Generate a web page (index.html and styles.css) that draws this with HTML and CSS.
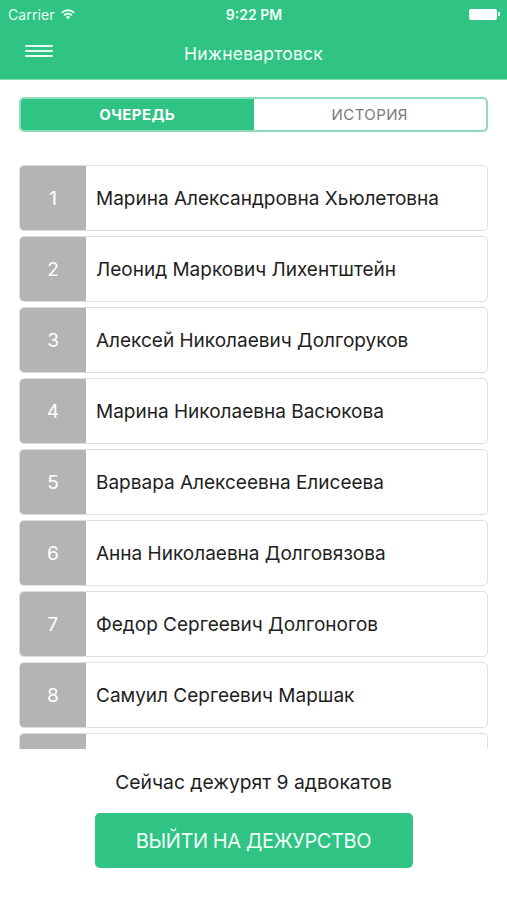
FILE: index.html
```html
<!DOCTYPE html>
<html lang="ru">
<head>
<meta charset="utf-8">
<title>Очередь</title>
<link rel="stylesheet" href="styles.css">
</head>
<body>
<div class="app">
  <header class="topbar">
    <div class="status">
      <div class="status-left">
        <span class="carrier">Carrier</span>
        <svg class="wifi" width="16" height="12" viewBox="0 0 16 12">
          <path d="M1 4.2 A10 10 0 0 1 15 4.2 L13.6 5.6 A8 8 0 0 0 2.4 5.6 Z" fill="#e8fff3"/>
          <path d="M3.4 6.6 A6.6 6.6 0 0 1 12.6 6.6 L11.2 8 A4.6 4.6 0 0 0 4.8 8 Z" fill="#e8fff3"/>
          <path d="M5.8 9 A3.2 3.2 0 0 1 10.2 9 L8 11.4 Z" fill="#e8fff3"/>
        </svg>
      </div>
      <span class="time">9:22 PM</span>
      <div class="battery"><span class="battery-body"></span><span class="battery-nub"></span></div>
    </div>
    <div class="navbar">
      <button class="menu" aria-label="Меню">
        <span></span><span></span><span></span>
      </button>
      <h1 class="title">Нижневартовск</h1>
    </div>
  </header>

  <div class="segments">
    <div class="segment active">ОЧЕРЕДЬ</div>
    <div class="segment">ИСТОРИЯ</div>
  </div>

  <div class="list">
    <div class="row"><div class="num">1</div><div class="name">Марина Александровна Хьюлетовна</div></div>
    <div class="row"><div class="num">2</div><div class="name">Леонид Маркович Лихентштейн</div></div>
    <div class="row"><div class="num">3</div><div class="name">Алексей Николаевич Долгоруков</div></div>
    <div class="row"><div class="num">4</div><div class="name">Марина Николаевна Васюкова</div></div>
    <div class="row"><div class="num">5</div><div class="name">Варвара Алексеевна Елисеева</div></div>
    <div class="row"><div class="num">6</div><div class="name">Анна Николаевна Долговязова</div></div>
    <div class="row"><div class="num">7</div><div class="name">Федор Сергеевич Долгоногов</div></div>
    <div class="row"><div class="num">8</div><div class="name">Самуил Сергеевич Маршак</div></div>
    <div class="row"><div class="num"></div><div class="name"></div></div>
  </div>

  <p class="count">Сейчас дежурят 9 адвокатов</p>
  <button class="duty">ВЫЙТИ НА ДЕЖУРСТВО</button>
</div>
</body>
</html>
```

FILE: styles.css
```css
* { box-sizing: border-box; }
html, body { margin: 0; padding: 0; background: #fff; }
body { font-family: Inter, Roboto, "Liberation Sans", sans-serif; color: #1e1e1e; }

.app { width: 507px; height: 900px; display: flex; flex-direction: column; align-items: center; }

.topbar {
  width: 100%;
  height: 80px;
  background: #2fc384;
  border-bottom: 1px solid #7fe0b5;
  display: flex;
  flex-direction: column;
}
.status {
  height: 28px;
  display: flex;
  align-items: center;
  justify-content: space-between;
  padding: 0 7px 0 8px;
}
.status-left { display: flex; align-items: center; gap: 5px; width: 120px; }
.carrier { font-size: 14px; color: #e8fff3; letter-spacing: 0.1px; }
.wifi { margin-top: -1px; }
.time { font-size: 14px; font-weight: 600; color: #f4fff9; }
.battery { width: 120px; display: flex; justify-content: flex-end; align-items: center; gap: 1px; }
.battery-body { width: 28px; height: 11px; background: #fff; border-radius: 2px; }
.battery-nub { width: 2px; height: 4px; background: #e8fff3; border-radius: 0 1px 1px 0; }

.navbar { flex: 1; display: flex; align-items: center; justify-content: center; position: relative; }
.menu {
  position: absolute;
  left: 25px;
  top: 17px;
  width: 28px;
  height: 12px;
  padding: 0;
  border: 0;
  background: none;
  display: flex;
  flex-direction: column;
  justify-content: space-between;
}
.menu span { display: block; height: 2px; background: #e8fff3; border-radius: 1px; }
.title { margin: 0; font-size: 17.5px; font-weight: 400; color: #f4fff9; letter-spacing: 0.2px; }

.segments {
  margin-top: 17px;
  width: 469px;
  height: 35px;
  border: 2px solid #8fdcba;
  border-radius: 5px;
  display: flex;
  overflow: hidden;
}
.segment {
  flex: 1;
  display: flex;
  align-items: center;
  justify-content: center;
  font-size: 15px;
  color: #7a7a7a;
  letter-spacing: 0.4px;
}
.segment.active { background: #2fc384; color: #fff; font-weight: 700; }

.list {
  margin-top: 33px;
  width: 469px;
  height: 584px;
  overflow: hidden;
  display: flex;
  flex-direction: column;
  gap: 5px;
  flex-shrink: 0;
}
.row {
  flex-shrink: 0;
  height: 66px;
  display: flex;
  border: 1px solid #dedede;
  border-radius: 5px;
  overflow: hidden;
}
.num {
  width: 66px;
  background: #b4b4b4;
  color: #fff;
  font-size: 19px;
  display: flex;
  align-items: center;
  justify-content: center;
}
.name {
  flex: 1;
  padding-left: 10px;
  display: flex;
  align-items: center;
  font-size: 19px;
  color: #1e1e1e;
}

.count { margin: 21px 0 0; font-size: 19.3px; line-height: 24px; color: #1e1e1e; }
.duty {
  margin-top: 19px;
  width: 318px;
  height: 55px;
  border: 0;
  border-radius: 5px;
  background: #2fc384;
  color: #effff7;
  font-family: inherit;
  font-size: 20px;
  letter-spacing: -0.4px;
}
```
